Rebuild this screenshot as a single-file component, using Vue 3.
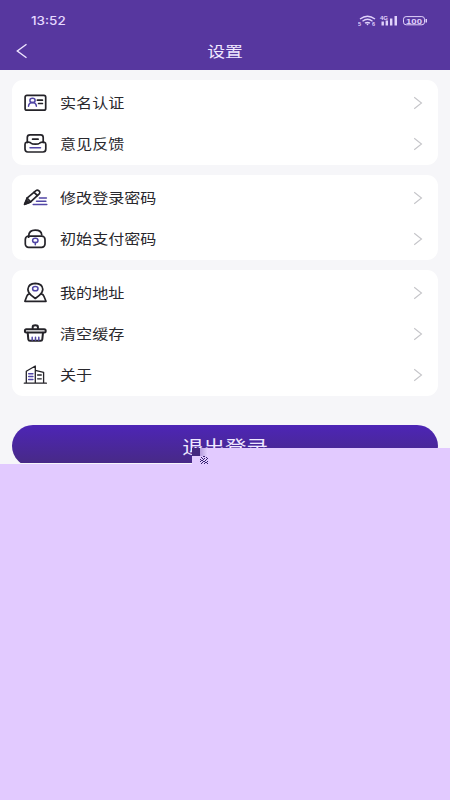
<script setup>
const groups = [
  [
    { icon: 'card', label: '实名认证' },
    { icon: 'feedback', label: '意见反馈' },
  ],
  [
    { icon: 'pen', label: '修改登录密码' },
    { icon: 'lock', label: '初始支付密码' },
  ],
  [
    { icon: 'address', label: '我的地址' },
    { icon: 'clean', label: '清空缓存' },
    { icon: 'about', label: '关于' },
  ],
]
</script>

<template>
  <div class="page">
    <header class="header">
      <div class="status">
        <span class="time">13:52</span>
        <svg class="signals" width="70" height="14" viewBox="0 0 70 14">
          <g fill="none" stroke="#e0d2fb" stroke-width="1.4">
            <path d="M2 5Q9.500-.6 17 5M4.500 7.200Q9.500 3.200 14.500 7.200M7 9.200Q9.500 7.500 12 9.200" />
            <rect x="45.500" y="2.600" width="21" height="8.200" rx="2.600" stroke-width="1" />
          </g>
          <g fill="#e0d2fb">
            <path d="M8 9.500h3l-1.500 2zM23.500 7.500h2.400v4h-2.400zM27.600 6.500h2.400v5h-2.400zM32 4.500h2.400v7H32zM36.500 2h2.500v9.500h-2.500zM67.500 5h1.500v3.600h-1.500z" />
            <text class="tiny" x="0" y="11.500">5</text>
            <text class="tiny" x="14" y="11.500">6</text>
            <text class="tiny" x="22" y="6" textLength="8" lengthAdjust="spacingAndGlyphs">4G</text>
            <text class="level" x="48" y="9.600" textLength="16" lengthAdjust="spacingAndGlyphs">100</text>
          </g>
        </svg>
      </div>
      <div class="nav">
        <svg class="back" width="12" height="16" viewBox="0 0 12 16">
          <path d="M10.500 1.200L1.300 8l9.200 6.800" fill="none" stroke="#eee5ff" stroke-width="1.400" />
        </svg>
        <h1 class="title"><span class="wide">设置</span></h1>
      </div>
    </header>

    <main class="content">
      <section v-for="(group, i) in groups" :key="i" class="card">
        <div v-for="item in group" :key="item.label" class="row">
          <svg class="icon" width="26" height="24" viewBox="0 0 26 24">
            <g v-if="item.icon === 'card'">
              <rect x="2.100" y="4.400" width="20.600" height="14.800" rx="1.800" />
              <g class="accent">
                <ellipse cx="9.500" cy="9.400" rx="2.600" ry="2.100" />
                <path d="M5.500 15.200Q5.800 11.600 9.500 11.500Q13 11.600 13.400 15.200" />
              </g>
              <path d="M14.400 9.200h5M15.600 12.500h3.800" />
            </g>
            <g v-else-if="item.icon === 'feedback'">
              <path d="M4.300 10.400V5.500Q4.300 2.900 7 2.900H17.600Q20.200 2.900 20.200 5.500V10.400" />
              <path d="M9.600 7.200h5.500" />
              <path d="M3.300 10.300Q7 9.500 8.200 11.200Q9 12.200 12.300 12.200T16.500 11.200Q17.700 9.500 21.400 10.300Q22.800 10.700 22.800 12.400V17Q22.800 20 20 20H4.700Q2 20 2 17V12.400Q2 10.700 3.300 10.300Z" />
              <path class="accent" d="M7 15.700h10.500" />
            </g>
            <g v-else-if="item.icon === 'pen'">
              <path d="M1.600 18.300L4 12.200L13 4.600Q14.400 3.700 16 4.900Q17.600 6.300 16.200 7.800L7.600 15.900Z" />
              <path d="M11 6.400l3.400 3.100M4 12.200l3.600 3.700" />
              <path d="M1.600 18.300l2-4 2.400 2.300z" fill="#242329" />
              <path class="accent" d="M16.400 11.900h7M13.500 15.300h9.400M10.200 18.600h13.600" />
            </g>
            <g v-else-if="item.icon === 'lock'">
              <path d="M5.700 10.200V8.700Q6 3.100 12.200 3.100T18.700 7.800" />
              <rect x="2.300" y="9.200" width="19.700" height="11.200" rx="3.300" />
              <g class="accent">
                <ellipse cx="12.300" cy="13.400" rx="2.700" ry="2.200" />
                <path d="M12.300 15.600v2.200" />
              </g>
            </g>
            <g v-else-if="item.icon === 'address'">
              <path d="M8.300 14.400Q4.900 11.700 4.900 8.300Q5.300 2.500 12.300 2.300Q19.500 2.500 19.800 8.300Q19.700 11.700 16.300 14.400L12.300 17.500Z" />
              <path d="M5.900 13.200Q4.500 13.500 3.800 15.200L1.900 20.300H23L20.900 15.200Q20.200 13.500 18.800 13.200" />
              <ellipse class="accent" cx="12.300" cy="7.700" rx="2.700" ry="2.100" />
            </g>
            <g v-else-if="item.icon === 'clean'" class="heavy">
              <path d="M9.700 7V4.700Q9.800 3.300 12.300 3.300T14.900 4.700V7" />
              <rect x="1.900" y="7.200" width="20.800" height="3.300" rx="1.500" />
              <path d="M4.700 10.700L5.300 17.300Q5.500 18.800 7 18.800H17.700Q19.100 18.800 19.300 17.300L20 10.700" />
              <path class="accent" d="M9.200 15.200v3M12.500 15.200v3M15.800 15.200v3" />
            </g>
            <g v-else class="light">
              <path d="M3.300 20V8.300L12.300 3V20M12.300 7.300L20.600 9.300V20M1.300 20.200H23.400" />
              <path class="accent" d="M5.700 10.700h4.200M5.700 13.600h4.200M5.700 16.500h4.200" />
              <path d="M14.600 12h3.700M14.600 15.800h3.700" />
            </g>
          </svg>
          <span class="label"><span class="wide">{{ item.label }}</span></span>
          <svg class="chevron" width="10" height="14" viewBox="0 0 10 14">
            <path d="M1.200 1.300L8.500 7l-7.300 5.700" fill="none" stroke="#c5c5c9" stroke-width="1.100" />
          </svg>
        </div>
      </section>
      <div class="action">
        <button class="logout"><span class="wide">退出登录</span></button>
      </div>
      <div class="cover">
        <div class="cell dark"></div>
        <div class="cell fade"></div>
        <div class="cell"></div>
        <svg class="cell" width="8" height="8" viewBox="0 0 8 8" shape-rendering="crispEdges">
          <path d="M1 1h1v1H1zM3 0h2v1H3zM6 1h1v1H6zM2 2h1v1H2zM4 2h1v1H4zM7 2h1v1H7zM0 3h1v1H0zM3 3h1v1H3zM6 3h1v1H6zM1 4h2v1H1zM5 4h1v1H5zM0 5h1v1H0zM3 5h2v1H3zM7 5h1v1H7zM2 6h1v1H2zM5 6h2v1H5zM1 7h1v1H1zM4 7h1v1H4zM7 7h1v1H7z" fill="#36236f" />
        </svg>
      </div>
    </main>
    <div class="blank"></div>
  </div>
</template>

<style>
body {
  margin: 0;
}
</style>

<style scoped>
.page {
  display: flex;
  flex-direction: column;
  height: 800px;
  overflow: hidden;
  background: #f6f6f9;
  color: #29282d;
  font-family: "Noto Sans CJK SC", sans-serif;
}
.header {
  height: 70px;
  flex: none;
  background: #57379f;
  color: #f0e8ff;
}
.status {
  display: flex;
  align-items: center;
  justify-content: space-between;
  height: 26px;
  padding: 8px 22px 0 31px;
}
.time {
  font: 500 11.5px/26px Inter, sans-serif;
  transform: scaleX(1.17);
  transform-origin: left;
  color: #e6d9ff;
}
.tiny {
  font: bold 5.5px "Liberation Sans", sans-serif;
}
.level {
  font: bold 7.500px "Liberation Sans", sans-serif;
}
.nav {
  display: grid;
  grid-template-columns: 12px 1fr 12px;
  align-items: center;
  height: 34px;
  padding: 0 16px;
}
.title {
  margin: 0;
  text-align: center;
  font-size: 15px;
  line-height: 34px;
  font-weight: 400;
}
.wide {
  display: inline-block;
  transform: scaleX(1.19);
}
.content {
  position: relative;
  flex: none;
  height: 394px;
  box-sizing: border-box;
  padding: 10px 12px 0;
}
.card {
  margin-bottom: 10px;
  padding: 2px 15px 1px 11px;
  border-radius: 11px;
  background: #fff;
}
.row {
  display: flex;
  align-items: center;
  height: 41px;
}
.icon {
  fill: none;
  stroke: #242329;
  stroke-width: 1.7;
  stroke-linecap: round;
  stroke-linejoin: round;
}
.accent {
  stroke: #5146a5;
  stroke-width: 1.5;
}
.heavy {
  stroke-width: 2;
}
.light {
  stroke-width: 1.3;
}
.label {
  flex: 1;
  margin-left: 11px;
  font-size: 13.5px;
  line-height: 41px;
}
.label .wide {
  transform-origin: left;
}
.action {
  height: 38px;
  margin-top: 29px;
  overflow: hidden;
}
.logout {
  display: block;
  width: 100%;
  height: 42px;
  padding: 0;
  border: 0;
  border-radius: 21px;
  background: linear-gradient(#4d25b6, #472a82);
  color: #efe8ff;
  font: 400 18px/42px "Noto Sans CJK SC", sans-serif;
}
.cover {
  position: absolute;
  top: 378px;
  left: 192px;
  right: 0;
  display: grid;
  grid-template-columns: 8px 8px;
  grid-template-rows: 8px 8px;
  background: linear-gradient(#e2caff, #e2caff) 16px 0 no-repeat;
}
.cell {
  background: #e2caff;
}
.dark {
  background: #44277f;
}
.fade {
  background: linear-gradient(90deg, #b49bdc, #e5d2ff);
}
.blank {
  flex: 1;
  background: #e2caff;
}
</style>
